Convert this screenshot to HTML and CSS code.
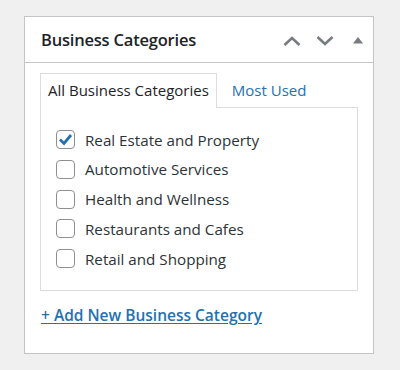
FILE: index.html
```html
<!DOCTYPE html>
<html>
<head>
<meta charset="utf-8">
<link rel="stylesheet" href="styles.css">
</head>
<body>
<div class="postbox">
  <div class="postbox-header">
    <h2 class="hndle">Business Categories</h2>
    <div class="handle-actions">
      <svg class="icon" width="18" height="10" viewBox="0 0 18 10"><path d="M1.5 9 L9 2 L16.5 9" fill="none" stroke="#787c82" stroke-width="2.6"/></svg>
      <svg class="icon" width="18" height="10" viewBox="0 0 18 10"><path d="M1.5 1 L9 8 L16.5 1" fill="none" stroke="#787c82" stroke-width="2.6"/></svg>
      <svg class="icon tri" width="10" height="7" viewBox="0 0 10 7"><path d="M5 0 L10 6.5 L0 6.5 Z" fill="#787c82"/></svg>
    </div>
  </div>
  <div class="inside">
    <ul class="tabs">
      <li class="tab active">All Business Categories</li>
      <li class="tab"><a href="#">Most Used</a></li>
    </ul>
    <div class="tabs-panel">
      <ul class="checklist">
        <li><label><span class="cb checked"><svg width="15" height="13" viewBox="0 0 15 13"><path d="M2 6.5 L6 10.5 L13 2" fill="none" stroke="#2271b1" stroke-width="2.8"/></svg></span>Real Estate and Property</label></li>
        <li><label><span class="cb"></span>Automotive Services</label></li>
        <li><label><span class="cb"></span>Health and Wellness</label></li>
        <li><label><span class="cb"></span>Restaurants and Cafes</label></li>
        <li><label><span class="cb"></span>Retail and Shopping</label></li>
      </ul>
    </div>
    <a class="add-new" href="#">+ Add New Business Category</a>
  </div>
</div>
</body>
</html>
```
FILE: styles.css
```css
* { box-sizing: border-box; }
html, body { margin: 0; padding: 0; }
body {
  background: #f0f0f1;
  font-family: "Open Sans", "Noto Sans", sans-serif;
  color: #1d2327;
  padding: 16px 26px 0 24px;
}
.postbox {
  width: 350px;
  height: 338px;
  background: #fff;
  border: 1px solid #c3c4c7;
}
.postbox-header {
  height: 46px;
  border-bottom: 1px solid #c3c4c7;
  display: flex;
  align-items: center;
  justify-content: space-between;
  padding: 0 10px 0 16px;
}
.hndle {
  margin: 0;
  font-size: 16.5px;
  font-weight: 600;
  color: #1d2327;
  letter-spacing: -0.2px;
}
.handle-actions {
  display: flex;
  align-items: center;
  gap: 15px;
  padding-top: 2px;
}
.handle-actions .tri { margin-left: 4px; margin-top: -1px; }
.inside {
  padding: 10px 15px 0 15px;
}
.tabs {
  list-style: none;
  margin: 0;
  padding: 0;
  display: flex;
  gap: 7px;
  height: 35px;
}
.tab {
  font-size: 15px;
  padding: 0 7px;
  line-height: 32px;
  height: 35px;
  border: 1px solid transparent;
  border-bottom: none;
  white-space: nowrap;
}
.tab.active {
  border-color: #dcdcde;
  background: #fff;
  position: relative;
  z-index: 1;
  color: #1d2327;
}
.tab a { color: #2271b1; text-decoration: none; }
.tabs-panel {
  border: 1px solid #dcdcde;
  margin-top: -1px;
  width: 318px;
  height: 184px;
  padding: 22px 15px 0 15px;
}
.checklist { list-style: none; margin: 0; padding: 0; }
.checklist li { height: 29.75px; }
.checklist label {
  display: flex;
  align-items: center;
  font-size: 15.2px;
  color: #2c3338;
  height: 19px;
  white-space: nowrap;
}
.cb {
  width: 19px;
  height: 19px;
  border: 1px solid #8c8f94;
  border-radius: 4px;
  margin-right: 10px;
  display: flex;
  align-items: center;
  justify-content: center;
  flex: none;
}
.add-new {
  display: inline-block;
  margin-top: 13px;
  margin-left: 1px;
  font-size: 15.5px;
  font-weight: 600;
  color: #2271b1;
  text-decoration: underline;
  text-underline-offset: 2px;
  white-space: nowrap;
}
```
